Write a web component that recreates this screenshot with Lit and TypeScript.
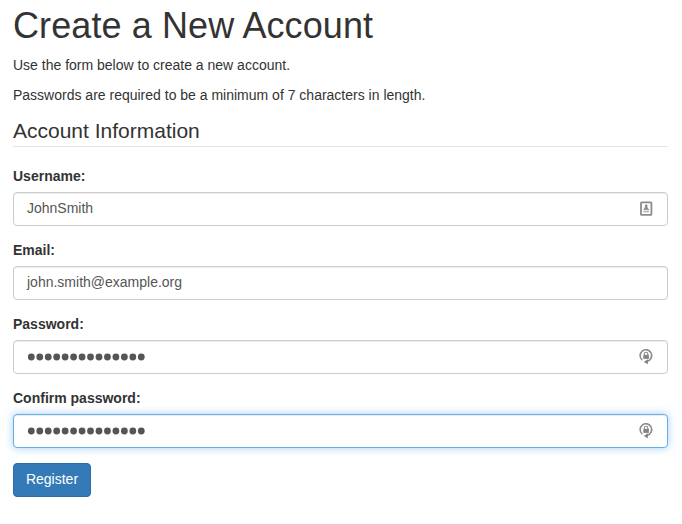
import { LitElement, html, css, svg, nothing } from "lit";
import { customElement, property } from "lit/decorators.js";

const contactIcon = html`<svg class="icon" viewBox="0 0 16 18" width="16" height="18" fill="none" stroke="#8c8c8c">
  <rect x="3" y="2.3" width="10.4" height="12.6" rx="0.6" stroke-width="1.8"/>
  <circle cx="8.2" cy="5.9" r="1.3" fill="#858585" stroke="none"/>
  <path d="M6 9.5c0-1.8 1-2.7 2.2-2.7s2.2.9 2.2 2.7z" fill="#8c8c8c" stroke="none"/>
  <path d="M5.4 9.6H11M5.4 11.7H11" stroke-width="1.1" stroke="#9c9c9c"/>
</svg>`;

const lockIcon = html`<svg class="icon" viewBox="0 0 16 18" width="16" height="18" fill="none" stroke="#8c8c8c">
  <path d="M4.3 12.1A5.8 5.8 0 1 1 9.2 13.2" stroke-width="1.6"/>
  <path d="M9.9 11.3v4.9L5.8 13.9z" fill="#808080" stroke="none"/>
  <rect x="5.3" y="6.8" width="5.6" height="4.1" fill="#858585" stroke="none"/>
  <path d="M6.4 7V5.9a1.7 1.7 0 0 1 3.4 0V7" stroke-width="1.1"/>
</svg>`;

@customElement("form-field")
export class FormField extends LitElement {
  @property() label = "";
  @property() value = "";
  @property() icon = "";
  @property({ type: Number }) dots = 0;
  @property({ type: Boolean }) active = false;

  static styles = css`
    :host { display: block; margin-bottom: 14px; }
    .label { display: block; height: 20px; line-height: 20px; margin-bottom: 6px; font-weight: 700; }
    .control { box-sizing: border-box; height: 34px; border: 1px solid #ccc; border-radius: 4px; background: #fff;
      display: flex; align-items: center; justify-content: space-between; padding: 0 13px;
      box-shadow: inset 0 1px 1px rgba(0,0,0,.075); color: #555; line-height: 20px; }
    .active { border-color: #66afe9; box-shadow: inset 0 1px 1px rgba(0,0,0,.075), 0 0 8px rgba(102,175,233,.6); }
    .icon { display: block; }
    .text { margin-top: -2px; }
  `;

  render() {
    return html`<label class="label">${this.label}</label>
      <div class="control ${this.active ? "active" : ""}">
        ${this.dots
          ? html`<svg width="120" height="10" fill="#555">${Array.from({ length: this.dots }, (_, i) => svg`<ellipse cx=${4.3 + i * 8.46} cy="5" rx="3.4" ry="3.4"/>`)}</svg>`
          : html`<span class="text">${this.value}</span>`}
        ${this.icon === "contact" ? contactIcon : this.icon === "lock" ? lockIcon : nothing}
      </div>`;
  }
}

@customElement("app-root")
export class AppRoot extends LitElement {
  static styles = css`
    :host { display: block; box-sizing: border-box; height: 524px; padding: 6px 14px 0 13px; overflow: hidden;
      background: #fff; color: #333; font: 14px/20px "Liberation Sans", Arial, sans-serif; }
    h1 { margin: 0 0 10px; font-size: 36px; line-height: 39px; font-weight: 400; letter-spacing: 0.1px; }
    p { margin: 0 0 10px; }
    .legend { height: 31px; line-height: 31px; font-size: 21px; border-bottom: 1px solid #e5e5e5; margin-bottom: 19px; }
    .button { box-sizing: border-box; display: block; width: 78px; height: 34px; margin: 15px 0 0; padding: 0 0 2px; border: 1px solid #2e6da4;
      border-radius: 4px; background: #337ab7; color: #fff; font: inherit; }
  `;

  render() {
    return html`
      <h1>Create a New Account</h1>
      <p>Use the form below to create a new account.</p>
      <p>Passwords are required to be a minimum of 7 characters in length.</p>
      <div class="legend">Account Information</div>
      <form-field label="Username:" value="JohnSmith" icon="contact"></form-field>
      <form-field label="Email:" value="john.smith@example.org"></form-field>
      <form-field label="Password:" dots="14" icon="lock"></form-field>
      <form-field label="Confirm password:" dots="14" icon="lock" active></form-field>
      <button class="button">Register</button>`;
  }
}
